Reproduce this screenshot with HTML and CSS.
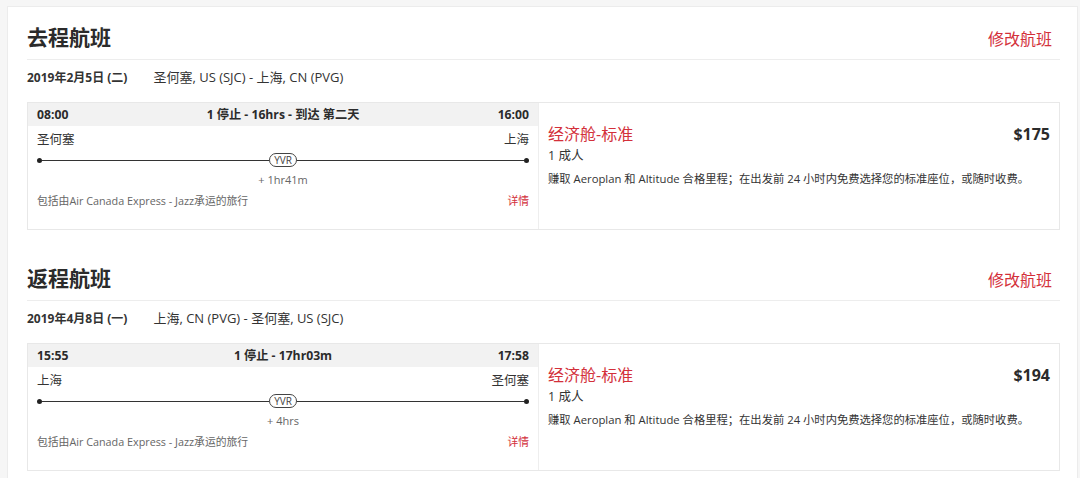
FILE: index.html
```html
<!DOCTYPE html>
<html lang="zh-CN">
<head>
<meta charset="utf-8">
<title>航班</title>
<link rel="stylesheet" href="styles.css">
</head>
<body>
<div class="panel">
  <section class="bound">
    <div class="bound-head">
      <h2 class="bound-title">去程航班</h2>
      <a class="change-link">修改航班</a>
    </div>
    <div class="date-row"><span class="date">2019年2月5日 (二)</span><span class="route">圣何塞, US (SJC) - 上海, CN (PVG)</span></div>
    <div class="flight-card">
      <div class="itin">
        <div class="itin-head"><span>08:00</span><span>1 停止 - 16hrs - 到达 第二天</span><span>16:00</span></div>
        <div class="cities"><span>圣何塞</span><span>上海</span></div>
        <div class="track"><span class="dot"></span><span class="line"></span><span class="stop">YVR</span><span class="line"></span><span class="dot"></span></div>
        <div class="layover">+ 1hr41m</div>
        <div class="note-row"><span class="note">包括由Air Canada Express - Jazz承运的旅行</span><a class="details">详情</a></div>
      </div>
      <div class="fare">
        <div class="fare-top"><span class="fare-name">经济舱-标准</span><span class="price">$175</span></div>
        <div class="pax">1 成人</div>
        <div class="fare-desc">赚取 Aeroplan 和 Altitude 合格里程；在出发前 24 小时内免费选择您的标准座位，或随时收费。</div>
      </div>
    </div>
  </section>
  <section class="bound">
    <div class="bound-head">
      <h2 class="bound-title">返程航班</h2>
      <a class="change-link">修改航班</a>
    </div>
    <div class="date-row"><span class="date">2019年4月8日 (一)</span><span class="route">上海, CN (PVG) - 圣何塞, US (SJC)</span></div>
    <div class="flight-card">
      <div class="itin">
        <div class="itin-head"><span>15:55</span><span>1 停止 - 17hr03m</span><span>17:58</span></div>
        <div class="cities"><span>上海</span><span>圣何塞</span></div>
        <div class="track"><span class="dot"></span><span class="line"></span><span class="stop">YVR</span><span class="line"></span><span class="dot"></span></div>
        <div class="layover">+ 4hrs</div>
        <div class="note-row"><span class="note">包括由Air Canada Express - Jazz承运的旅行</span><a class="details">详情</a></div>
      </div>
      <div class="fare">
        <div class="fare-top"><span class="fare-name">经济舱-标准</span><span class="price">$194</span></div>
        <div class="pax">1 成人</div>
        <div class="fare-desc">赚取 Aeroplan 和 Altitude 合格里程；在出发前 24 小时内免费选择您的标准座位，或随时收费。</div>
      </div>
    </div>
  </section>
</div>
</body>
</html>
```

FILE: styles.css
```css
* { box-sizing: border-box; }
html, body { margin: 0; padding: 0; }
body {
  background: #f6f6f6;
  font-family: "Open Sans", "Noto Sans CJK SC", sans-serif;
  color: #333;
}
.panel {
  margin: 6px 2px 0 7px;
  background: #fff;
  border: 1px solid #ececec;
  padding: 15px 17px 20px 19px;
}
.bound + .bound { margin-top: 33px; }
.bound-head {
  display: flex;
  justify-content: space-between;
  align-items: baseline;
  border-bottom: 1px solid #ededed;
  padding-bottom: 7px;
}
.bound-title {
  margin: 0;
  font-size: 21px;
  line-height: 30px;
  font-weight: 700;
  color: #2b2b2b;
}
.change-link {
  font-size: 16px;
  color: #d3303a;
  margin-right: 8px;
}
.date-row {
  display: flex;
  align-items: baseline;
  height: 18px;
  margin-top: 8px;
  font-size: 12px;
  line-height: 18px;
  color: #333;
}
.date { font-weight: 700; margin-right: 26px; }
.route { font-size: 13px; }
.flight-card {
  margin-top: 16px;
  border: 1px solid #e8e8e8;
  display: flex;
  height: 128px;
}
.itin {
  width: 511px;
  border-right: 1px solid #eeeeee;
  padding-bottom: 20px;
}
.itin-head {
  display: flex;
  justify-content: space-between;
  height: 23px;
  line-height: 23px;
  background: #f2f2f2;
  padding: 0 9px;
  font-size: 12.2px;
  font-weight: 700;
  color: #2b2b2b;
}
.cities {
  display: flex;
  justify-content: space-between;
  margin-top: 5px;
  padding: 0 9px;
  font-size: 12.5px;
  line-height: 18px;
  color: #333;
}
.track {
  display: flex;
  align-items: center;
  margin-top: 4px;
  height: 14px;
  padding: 0 9px;
}
.dot {
  width: 5px; height: 5px;
  border-radius: 50%;
  background: #222;
  flex: none;
}
.line {
  flex: 1;
  height: 1px;
  background: #333;
}
.stop {
  flex: none;
  font-size: 10px;
  line-height: 12px;
  padding: 0 4px;
  border: 1px solid #444;
  border-radius: 7px;
  color: #444;
}
.layover {
  margin-top: 5px;
  text-align: center;
  font-size: 11px;
  line-height: 16px;
  color: #666;
}
.note-row {
  display: flex;
  justify-content: space-between;
  margin-top: 5px;
  padding: 0 9px;
  font-size: 10.8px;
  line-height: 16px;
}
.note { color: #666; }
.details { color: #d3303a; }
.fare {
  flex: 1;
  padding: 20px 9px 0 9px;
}
.fare-top {
  display: flex;
  justify-content: space-between;
  align-items: baseline;
  line-height: 22px;
}
.fare-name { font-size: 16px; color: #d3303a; }
.price { font-size: 16px; font-weight: 700; color: #2b2b2b; }
.pax {
  margin-top: 2px;
  font-size: 12.5px;
  line-height: 18px;
  color: #333;
}
.fare-desc {
  margin-top: 6px;
  font-size: 11.3px;
  line-height: 16px;
  color: #333;
}
```
